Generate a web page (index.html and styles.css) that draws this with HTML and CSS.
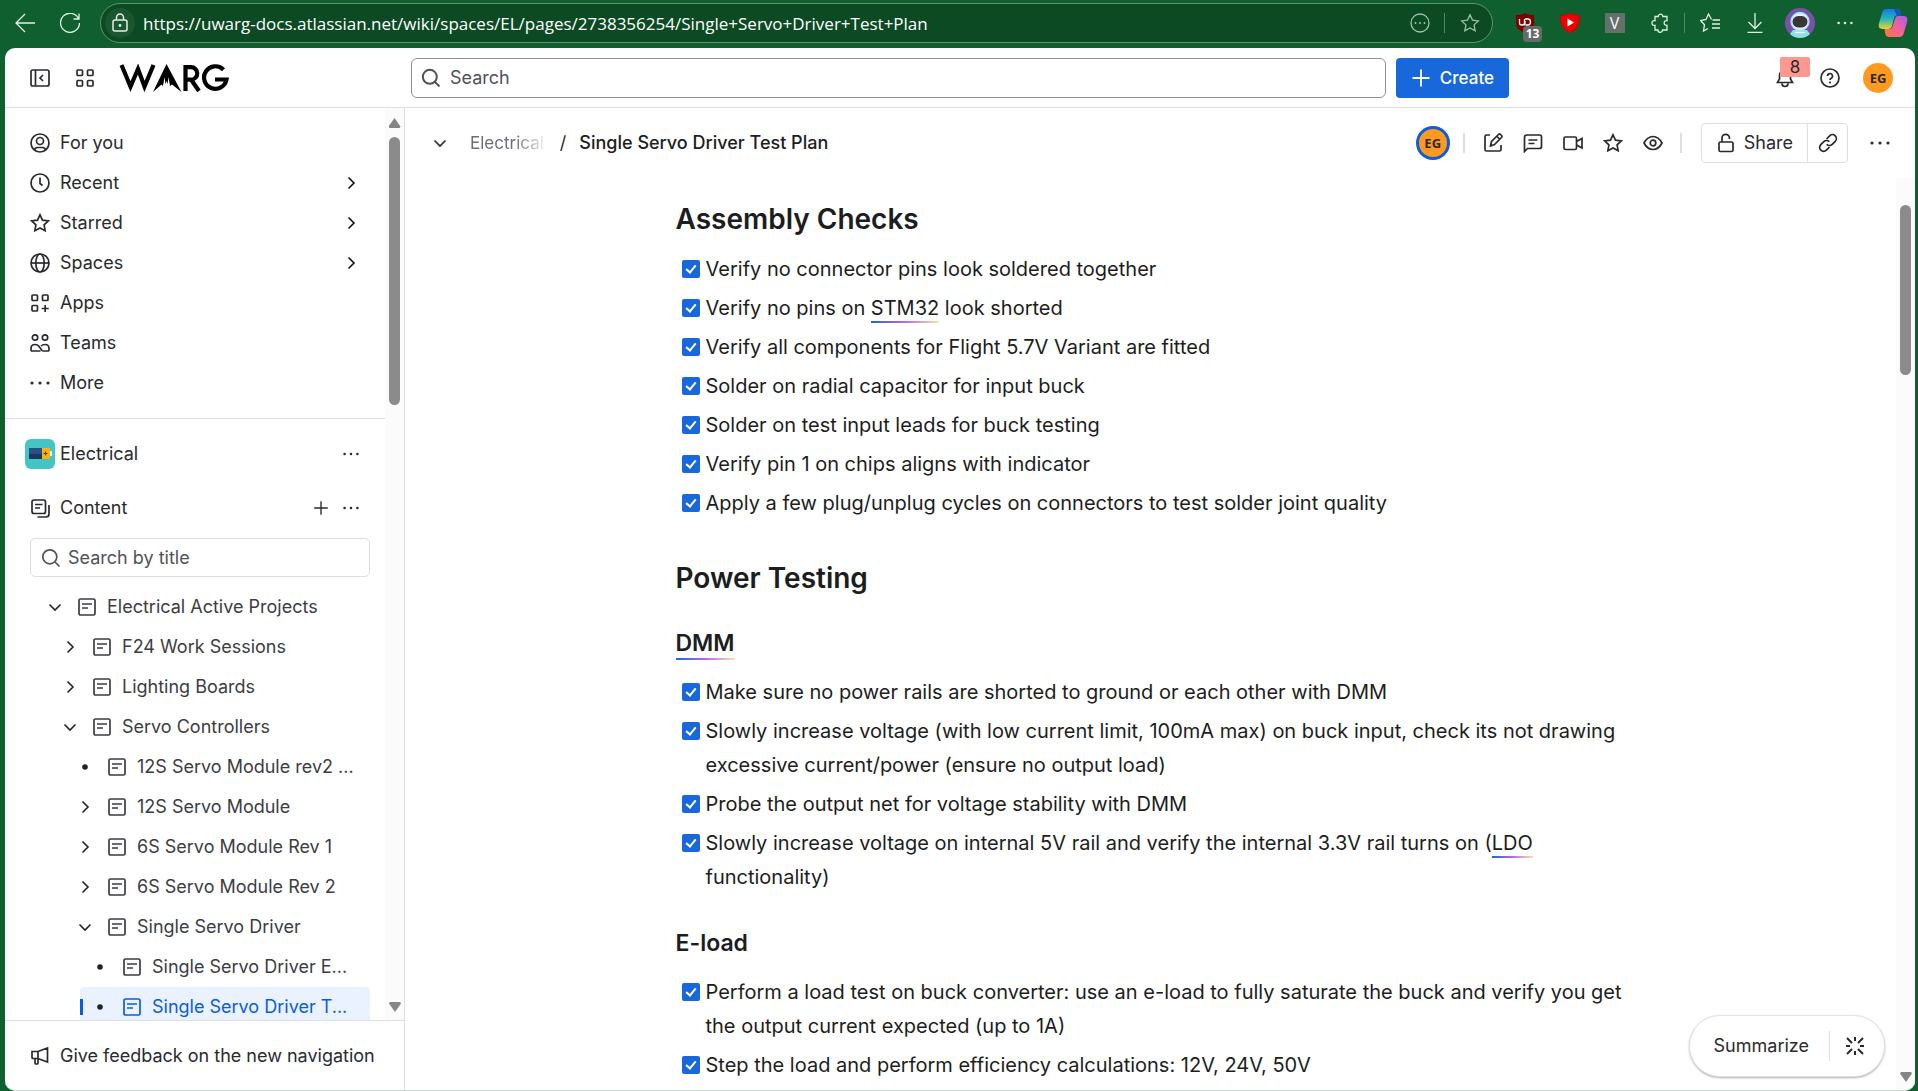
FILE: index.html
```
<!DOCTYPE html>
<html lang="en">
<head>
<meta charset="utf-8">
<title>Single Servo Driver Test Plan</title>
<link rel="stylesheet" href="styles.css">
</head>
<body>
<svg class="defs" aria-hidden="true">
  <symbol id="page" viewBox="0 0 20 20"><rect x="2" y="2" width="16" height="16" rx="1.5"/><path d="M5 7h10M5 11h6"/></symbol>
  <symbol id="right" viewBox="0 0 20 20"><path d="M7.500 4.500 13 10l-5.500 5.500"/></symbol>
  <symbol id="down" viewBox="0 0 20 20"><path d="M4.500 7.500 10 13l5.500-5.500"/></symbol>
  <symbol id="star" viewBox="0 0 20 20"><path d="m10 1.800 2.500 5.300 5.800.8-4.200 4 1 5.800-5.100-2.800-5.100 2.800 1-5.800-4.200-4 5.800-.8z"/></symbol>
  <symbol id="more" viewBox="0 0 20 20"><g class="fill"><circle cx="2" cy="10" r="1.600"/><circle cx="10" cy="10" r="1.600"/><circle cx="18" cy="10" r="1.600"/></g></symbol>
  <symbol id="bullet" viewBox="0 0 20 20"><circle class="fill" cx="10" cy="10" r="2.800"/></symbol>
  <symbol id="search" viewBox="0 0 20 20"><circle cx="8.800" cy="8.800" r="7"/><path d="m14 14 4.500 4.500"/></symbol>
  <symbol id="plus" viewBox="0 0 20 20"><path d="M10 1.500v17M1.500 10h17"/></symbol>
</svg>

<header class="browser">
  <button class="tool" aria-label="Back"><svg viewBox="0 0 20 20"><path d="M20 10H1M10 1 1 10l9 9"/></svg></button>
  <button class="tool" aria-label="Reload"><svg viewBox="0 0 20 20"><path d="M18.700 6A9.500 9.500 0 1 0 19.500 10M19 .5V6h-5.500"/></svg></button>
  <div class="address">
    <button class="site" aria-label="Site information"><svg viewBox="0 0 20 20"><rect x="3" y="7" width="14" height="11" rx="2"/><path d="M6.500 7V4.500a3.500 3.500 0 0 1 7 0V7"/><circle class="fill" cx="10" cy="12.500" r="1.400"/></svg></button>
    <input class="url" aria-label="Address" value="https://uwarg-docs.atlassian.net/wiki/spaces/EL/pages/2738356254/Single+Servo+Driver+Test+Plan">
    <button class="tool faint" aria-label="Page actions"><svg viewBox="0 0 20 20"><circle cx="10" cy="10" r="9"/><g class="fill"><circle cx="5.500" cy="10" r="1"/><circle cx="10" cy="10" r="1"/><circle cx="14.500" cy="10" r="1"/></g></svg></button>
    <span class="rule"></span>
    <button class="tool faint" aria-label="Add to favorites"><svg><use href="#star"/></svg></button>
  </div>
  <div class="extensions">
    <button class="tool" aria-label="Ad blocker"><svg viewBox="0 0 20 20"><path d="M10 0c3 2 6 2 9 2v8c0 5-4 8-9 10-5-2-9-5-9-10V2c3 0 6 0 9-2z" fill="#7d0000" stroke="none"/><path d="M4.500 6v4q0 2 2.500 2t2.500-2V6M10 12.500V8m0-2h3q2.500 0 2.500 3t-2.500 3h-2" stroke="#fff"/></svg><span class="count">13</span></button>
    <button class="tool" aria-label="Video extension"><svg viewBox="0 0 20 20"><path d="M10 0c3 2 6 2.500 9.500 2.500C20 11 17 17 10 20 3 17 0 11 .5 2.500 4 2.500 7 2 10 0z" fill="#f00000" stroke="#a31414"/><path d="m7.500 5.500 6.500 4-6.500 4z" fill="#fff" stroke="none"/></svg></button>
    <button class="tool" aria-label="V extension"><span class="vtile">V</span></button>
    <button class="tool" aria-label="Extensions"><svg viewBox="0 0 20 20"><path d="M5 3.500h3.200a2.300 2.300 0 1 1 4.600 0H17v4.200c-3.800-.7-3.800 5.300 0 4.600V17h-4.500a2.300 2.300 0 1 1-4.600 0H5v-4.700a2.400 2.400 0 1 1 0-4.600z"/></svg></button>
    <span class="rule"></span>
    <button class="tool" aria-label="Favorites"><svg viewBox="0 0 20 20"><path d="M11.500 6.500 8.500 1 6 6.500l-5.500 1 4 4.200-1 6.300 4.500-2.500M12.500 7h7.500M12 11h8M12 15h8"/></svg></button>
    <button class="tool" aria-label="Downloads"><svg viewBox="0 0 20 20"><path d="M10 0v15M3.500 9l6.500 6.500L16.500 9M2.500 19.500h15"/></svg></button>
    <button class="tool" aria-label="Profile"><svg class="big" viewBox="0 0 30 30"><circle cx="15" cy="15" r="15" fill="#7a51a8" stroke="none"/><path d="M8 22h14l3 4q-4 4-10 4T5 26z" fill="#8ce0ea" stroke="none"/><circle cx="15" cy="13.500" r="9" fill="#d9f3fa" stroke="#a6e3f0"/><rect x="7.500" y="8" width="15" height="11.500" rx="5.700" fill="#3b3533" stroke="none"/><path d="M10 24.500h10" stroke="#fff"/></svg></button>
    <button class="tool" aria-label="Settings and more"><svg class="small"><use href="#more"/></svg></button>
    <button class="tool" aria-label="Copilot"><svg class="big" viewBox="0 0 28 28"><defs><linearGradient id="cool" x2="0" y2="1"><stop stop-color="#1479e8"/><stop offset=".5" stop-color="#28b6b8"/><stop offset="1" stop-color="#e9d52b"/></linearGradient><linearGradient id="warm" x1="1" x2="0" y2="1"><stop stop-color="#a95bf0"/><stop offset=".5" stop-color="#f4619c"/><stop offset="1" stop-color="#fb7a36"/></linearGradient></defs><g stroke="none"><path d="M8 1h10q2 0 2.500 2l1 4h-4q-2 0-2.500 2l-2 8q-.6 2.500-3 2.500H4Q-.5 19.500 1 14L4 4q1-3 4-3z" fill="url(#cool)"/><path d="M17 1q2.500 0 3.500 3l1 3.500h-4L15 1z" fill="#0d55c8"/><path d="M20 27H10q-2.500 0-3-2l-1-5.500h5q2 0 2.500-2l2.500-8Q16.700 7.500 19 7.500h5q4.500 0 3 6l-3 10q-1 3.500-4 3.500z" fill="url(#warm)"/></g></svg></button>
  </div>
</header>

<div class="app">
  <header class="topbar">
    <div class="brand">
      <button class="icon" aria-label="Collapse sidebar"><svg viewBox="0 0 20 20"><rect x="1" y="2" width="18" height="16" rx="2"/><path d="M5.500 2v16M13 7l-3 3 3 3"/></svg></button>
      <button class="icon" aria-label="Switch apps"><svg viewBox="0 0 20 20"><rect x="2" y="2" width="5.500" height="5.500" rx="1"/><rect x="12.500" y="2" width="5.500" height="5.500" rx="1"/><rect x="2" y="12.500" width="5.500" height="5.500" rx="1"/><rect x="12.500" y="12.500" width="5.500" height="5.500" rx="1"/></svg></button>
      <a class="logo" href="#" aria-label="WARG home">
        <svg viewBox="0 0 110 28"><g fill="none" stroke="#000" stroke-width="4.200"><path d="M2.500 1 11.500 22.500 19 5l6.500 17.500L34.500 1" stroke-miterlimit="8"/><path d="M66.500 27V3.200h5.500a6 6 0 0 1 0 12.500h-5M72 15.500 80 27"/><path d="M104.500 5.700A11.300 11.300 0 1 0 107.500 15.500H96"/></g><path d="M47.500 0 62.500 28 53 20.500 51 22 49.500 13 48.600 20 47.500 17 46.400 20 45.500 13 44 22 42.500 20.500 34 28z"/></svg>
      </a>
    </div>
    <label class="search"><svg><use href="#search"/></svg><input type="search" placeholder="Search" aria-label="Search"></label>
    <button class="create"><svg><use href="#plus"/></svg>Create</button>
    <div class="account">
      <button class="icon bell" aria-label="Notifications"><svg viewBox="0 0 20 20"><path d="M2.500 14.500 4.500 11V7.500a5.500 5.500 0 0 1 11 0V11l2 3.500zM7 15.500a3 3 0 0 0 6 0"/></svg><span class="badge">8</span></button>
      <button class="icon" aria-label="Help"><svg viewBox="0 0 20 20"><circle cx="10" cy="10" r="9"/><path d="M7.500 8a2.500 2.500 0 1 1 3.700 2.200q-1.200.6-1.200 1.800"/><circle class="fill" cx="10" cy="14.500" r="1.100"/></svg></button>
      <button class="avatar" aria-label="Your profile">EG</button>
    </div>
  </header>

  <div class="body">
    <aside class="sidebar">
      <div class="scroller">
        <nav class="nav">
          <ul class="rows">
            <li><a class="row" href="#"><svg viewBox="0 0 20 20"><circle cx="10" cy="10" r="9"/><circle cx="10" cy="8" r="3.500"/><path d="M4.500 17q.5-2.500 3-2.500h5q2.500 0 3 2.500"/></svg>For you</a></li>
            <li><a class="row" href="#"><svg viewBox="0 0 20 20"><circle cx="10" cy="10" r="9"/><path d="M10 4.500v6l2.500 2"/></svg>Recent<svg class="end"><use href="#right"/></svg></a></li>
            <li><a class="row" href="#"><svg><use href="#star"/></svg>Starred<svg class="end"><use href="#right"/></svg></a></li>
            <li><a class="row" href="#"><svg viewBox="0 0 20 20"><circle cx="10" cy="10" r="9"/><ellipse cx="10" cy="10" rx="4.200" ry="9"/><path d="M1 10h18"/></svg>Spaces<svg class="end"><use href="#right"/></svg></a></li>
            <li><a class="row" href="#"><svg viewBox="0 0 20 20"><rect x="2" y="2" width="5.500" height="5.500" rx="1"/><rect x="12.500" y="2" width="5.500" height="5.500" rx="1"/><rect x="2" y="12.500" width="5.500" height="5.500" rx="1"/><path d="M15.200 12v7M11.700 15.500h7"/></svg>Apps</a></li>
            <li><a class="row" href="#"><svg viewBox="0 0 20 20"><circle cx="5" cy="4.500" r="2.700"/><circle cx="15" cy="4.500" r="2.700"/><path d="M10.500 18H2q-1 0-1-1v-1.500q0-4 4-4 3 0 4.500 2.500l2.500 3.500q.5.500 1.500.5H18q1 0 1-1v-1.500q0-4-4-4-2.500 0-4 1.500"/></svg>Teams</a></li>
            <li><a class="row" href="#"><svg><use href="#more"/></svg>More</a></li>
          </ul>
        </nav>
        <section class="space">
          <div class="row">
            <svg class="space-logo" viewBox="0 0 30 30"><rect width="30" height="30" rx="6" fill="#45c4c6"/><path d="M4 9h13v11H4z" fill="#2a4f87"/><path d="M4 15h13v5H4z" fill="#173a58"/><path d="M17 9h7q1 0 1 1v9q0 1-1 1h-7z" fill="#ffae0c"/><path d="M26 12v5" stroke="#fff"/><path d="M18.500 14.500h4M20.500 12.500v4" stroke="#4c3a1c" stroke-width="1"/></svg>
            Electrical<button class="mini end" aria-label="Space options"><svg><use href="#more"/></svg></button>
          </div>
          <div class="row">
            <svg viewBox="0 0 20 20"><rect x="2" y="2" width="13.500" height="13.500" rx="2"/><path d="M5 6.500h7.500M5 10h5M19 7v9q0 3-3 3H7.500"/></svg>
            Content<button class="mini end" aria-label="Create content"><svg class="dark"><use href="#plus"/></svg></button><button class="mini" aria-label="Content options"><svg><use href="#more"/></svg></button>
          </div>
          <label class="filter"><svg><use href="#search"/></svg><input type="search" placeholder="Search by title" aria-label="Search by title"></label>
          <ul class="tree">
            <li><a href="#"><svg><use href="#down"/></svg><svg><use href="#page"/></svg><span>Electrical Active Projects</span></a>
              <ul>
                <li><a href="#"><svg><use href="#right"/></svg><svg><use href="#page"/></svg><span>F24 Work Sessions</span></a></li>
                <li><a href="#"><svg><use href="#right"/></svg><svg><use href="#page"/></svg><span>Lighting Boards</span></a></li>
                <li><a href="#"><svg><use href="#down"/></svg><svg><use href="#page"/></svg><span>Servo Controllers</span></a>
                  <ul>
                    <li><a href="#"><svg><use href="#bullet"/></svg><svg><use href="#page"/></svg><span>12S Servo Module rev2 ...</span></a></li>
                    <li><a href="#"><svg><use href="#right"/></svg><svg><use href="#page"/></svg><span>12S Servo Module</span></a></li>
                    <li><a href="#"><svg><use href="#right"/></svg><svg><use href="#page"/></svg><span>6S Servo Module Rev 1</span></a></li>
                    <li><a href="#"><svg><use href="#right"/></svg><svg><use href="#page"/></svg><span>6S Servo Module Rev 2</span></a></li>
                    <li><a href="#"><svg><use href="#down"/></svg><svg><use href="#page"/></svg><span>Single Servo Driver</span></a>
                      <ul>
                        <li><a href="#"><svg><use href="#bullet"/></svg><svg><use href="#page"/></svg><span>Single Servo Driver E...</span></a></li>
                        <li><a class="current" href="#" aria-current="page"><svg><use href="#bullet"/></svg><svg><use href="#page"/></svg><span>Single Servo Driver T...</span></a></li>
                      </ul>
                    </li>
                  </ul>
                </li>
              </ul>
            </li>
          </ul>
        </section>
      </div>
      <div class="scrollbar" aria-hidden="true"><i class="up"></i><i class="thumb"></i><i class="dn"></i></div>
      <a class="feedback row" href="#"><svg viewBox="0 0 20 20"><path d="M2 5.500h6L17.500 2v14L8 12.500H3q-1 0-1-1zM8 5.500v7M5 12.500v4.500q0 1 1 1h1q1 0 1-1v-4"/></svg>Give feedback on the new navigation</a>
    </aside>

    <main class="main">
      <div class="pagebar">
        <button class="icon" aria-label="Show breadcrumbs"><svg><use href="#down"/></svg></button>
        <nav class="crumbs" aria-label="Breadcrumbs"><a class="crumb" href="#">Electrical</a><span>/</span><a class="here" href="#">Single Servo Driver Test Plan</a></nav>
        <div class="actions">
          <button class="avatar ring" aria-label="Viewing now">EG</button>
          <span class="rule"></span>
          <button class="icon" aria-label="Edit"><svg viewBox="0 0 20 20"><path d="M7 2H3.500q-1.500 0-1.500 1.500v13Q2 18 3.500 18h13q1.500 0 1.500-1.500V12M7.500 13l1-4.500 7-7q1-1 2 0l1 1q1 1 0 2l-7 7zM14 3.500 16.500 6"/></svg></button>
          <button class="icon" aria-label="Comments"><svg viewBox="0 0 20 20"><path d="M1.500 18.500v-14Q1.500 2 4 2h12.500Q18.500 2 18.500 4v9.500q0 2-2 2h-12zM5.500 7h9M5.500 10.500h6"/></svg></button>
          <button class="icon" aria-label="Video"><svg viewBox="0 0 20 20"><rect x="1" y="4" width="12.500" height="12.500" rx="1.500"/><path d="m13.500 8.500 5.500-3v9.500l-5.500-3"/></svg></button>
          <button class="icon" aria-label="Star"><svg><use href="#star"/></svg></button>
          <button class="icon" aria-label="Watch"><svg viewBox="0 0 20 20"><path d="M1 10q3.500-6.500 9-6.500T19 10q-3.500 6.500-9 6.500T1 10z"/><circle cx="10" cy="10" r="2.800"/></svg></button>
          <span class="rule"></span>
          <div class="share">
            <button class="share-main"><svg viewBox="0 0 20 20"><rect x="3" y="9" width="14" height="9.500" rx="1.500"/><path d="M6 9V5a3.700 3.700 0 0 1 7.400 0v1"/></svg>Share</button>
            <button class="share-link" aria-label="Copy link"><svg viewBox="0 0 20 20"><path d="m8.500 6 3.200-3.200a3.800 3.800 0 0 1 5.500 5.500l-3 3a3.800 3.800 0 0 1-5.500 0M11.500 14l-3.200 3.200a3.800 3.800 0 0 1-5.500-5.500l3-3a3.800 3.800 0 0 1 5.500 0"/></svg></button>
          </div>
          <button class="icon last" aria-label="More actions"><svg><use href="#more"/></svg></button>
        </div>
      </div>

      <div class="viewport">
        <article class="doc">
          <h2>Assembly Checks</h2>
          <ul class="tasks">
            <li><label><input type="checkbox" checked><span>Verify no connector pins look soldered together</span></label></li>
            <li><label><input type="checkbox" checked><span>Verify no pins on <span class="term">STM32</span> look shorted</span></label></li>
            <li><label><input type="checkbox" checked><span>Verify all components for Flight 5.7V Variant are fitted</span></label></li>
            <li><label><input type="checkbox" checked><span>Solder on radial capacitor for input buck</span></label></li>
            <li><label><input type="checkbox" checked><span>Solder on test input leads for buck testing</span></label></li>
            <li><label><input type="checkbox" checked><span>Verify pin 1 on chips aligns with indicator</span></label></li>
            <li><label><input type="checkbox" checked><span>Apply a few plug/unplug cycles on connectors to test solder joint quality</span></label></li>
          </ul>
          <h2>Power Testing</h2>
          <h3><span class="term">DMM</span></h3>
          <ul class="tasks">
            <li><label><input type="checkbox" checked><span>Make sure no power rails are shorted to ground or each other with DMM</span></label></li>
            <li><label><input type="checkbox" checked><span>Slowly increase voltage (with low current limit, 100mA max) on buck input, check its not drawing excessive current/power (ensure no output load)</span></label></li>
            <li><label><input type="checkbox" checked><span>Probe the output net for voltage stability with DMM</span></label></li>
            <li><label><input type="checkbox" checked><span>Slowly increase voltage on internal 5V rail and verify the internal 3.3V rail turns on (<span class="term">LDO</span> functionality)</span></label></li>
          </ul>
          <h3>E-load</h3>
          <ul class="tasks">
            <li><label><input type="checkbox" checked><span>Perform a load test on buck converter: use an e-load to fully saturate the buck and verify you get the output current expected (up to 1A)</span></label></li>
            <li><label><input type="checkbox" checked><span>Step the load and perform efficiency calculations: 12V, 24V, 50V</span></label></li>
          </ul>
        </article>
        <div class="scrollbar" aria-hidden="true"><i class="thumb"></i><i class="dn"></i></div>
      </div>

      <div class="summarize">
        <button class="sum-text">Summarize</button>
        <button class="sum-icon" aria-label="Assistant options"><svg viewBox="0 0 20 20"><path d="M10 1v4M10 15v4M1 10h4M15 10h4M2 2l5 5M18 2l-5 5M2 18l5-5M18 18l-5-5"/></svg></button>
      </div>
    </main>
  </div>
</div>
</body>
</html>
```
FILE: styles.css
```
* { box-sizing: border-box; }

:root {
  --green: #10602f;
  --text: #292a2e;
  --subtle: #505258;
  --line: #dddee1;
  --blue: #1868db;
}

body {
  margin: 0;
  height: 100vh;
  display: flex;
  flex-direction: column;
  overflow: hidden;
  background: var(--green);
  color: var(--text);
  font: 400 18px/24px Inter, "Liberation Sans", sans-serif;
}

button, input { font: inherit; color: inherit; }
button { border: 0; padding: 0; background: none; display: flex; align-items: center; justify-content: center; }
input { border: 0; padding: 0; background: none; outline: none; min-width: 0; }
a { color: inherit; text-decoration: none; }
ul { list-style: none; margin: 0; padding: 0; }

.defs { display: none; }
svg { width: 20px; height: 20px; flex: none; fill: none; stroke: currentColor; stroke-width: 2; }
.fill { fill: currentColor; stroke: none; }

/* Browser toolbar */
.browser { display: flex; align-items: center; height: 48px; padding: 0 3px 2px 2px; color: #e2f0e4; }
.browser svg { stroke-width: 1.300; }
.tool { position: relative; width: 45px; height: 44px; flex: none; }
.tool svg.big { width: 30px; height: 30px; }
.tool svg.small { width: 16px; stroke-width: 1; }
.faint { color: #a0bfa7; }
.address { flex: 1; display: flex; align-items: center; height: 40px; margin-left: 8px; padding: 0 0 0 4px; border: 1px solid #5b9468; border-radius: 20px; background: #0b4a23; }
.site { width: 30px; height: 30px; border-radius: 50%; background: #1a5630; margin-right: 8px; }
.site svg { stroke-width: 1.500; }
.url { flex: 1; height: 30px; color: #fff; font: 17px/24px "Open Sans", "Noto Sans", sans-serif; }
.browser .rule { width: 1px; height: 20px; margin: 0 2px; background: #548a62; }
.extensions { display: flex; align-items: center; padding-left: 9px; }
.extensions .tool:last-child { margin-left: 3px; }
.count { position: absolute; left: 21px; top: 25px; width: 19px; height: 16px; border-radius: 4px; background: #666b69; color: #fff; font: 700 12px/16px "Open Sans", sans-serif; }
.vtile { width: 20px; height: 20px; background: #66706a; color: #fff; font: 16px/20px "Open Sans", sans-serif; }

/* Application frame */
.app { flex: 1; min-height: 0; margin: 0 3px 0 5px; display: flex; flex-direction: column; overflow: hidden; background: #fff; border-bottom: 1px solid #cbdcd2; border-radius: 10px; }
.topbar { display: flex; align-items: center; height: 60px; flex: none; border-bottom: 1px solid var(--line); }
.icon { width: 40px; height: 40px; flex: none; }
.icon svg, .row svg { stroke-width: 1.700; }
.brand { display: flex; align-items: center; gap: 5px; width: 406px; flex: none; padding-left: 15px; }
.logo { margin-left: 9px; }
.logo svg { display: block; width: 110px; height: 28px; fill: #000; stroke: none; }
.search { flex: 1; display: flex; align-items: center; gap: 9px; height: 40px; padding: 0 9px; border: 1px solid #8c8f97; border-radius: 6px; color: var(--subtle); }
.search input { flex: 1; }
input::placeholder { color: var(--subtle); opacity: 1; }
.create { height: 40px; margin-left: 10px; padding: 0 15px; gap: 9px; border-radius: 4px; background: var(--blue); color: #fff; font-weight: 500; font-size: 17px; }
.create svg { stroke-width: 1.800; }
.account { display: flex; align-items: center; width: 406px; justify-content: flex-end; gap: 5px; padding-right: 22px; }
.bell { position: relative; }
.badge { position: absolute; left: 15px; top: -1px; width: 30px; height: 20px; background: #fd9891; border-radius: 2px; font-size: 17px; line-height: 20px; }
.avatar { width: 30px; height: 30px; flex: none; border-radius: 50%; background: #ff991f; color: #292a2e; font: 700 13px/16px "Open Sans", sans-serif; }
.account .avatar { margin-left: 8px; }
.body { flex: 1; min-height: 0; display: flex; }

/* Sidebar */
.sidebar { display: grid; grid-template-columns: 1fr 19px; grid-template-rows: minmax(0, 1fr) auto; width: 400px; flex: none; border-right: 1px solid var(--line); }
.scroller { overflow: hidden; }
.nav { padding: 15px 15px 15px 25px; border-bottom: 1px solid var(--line); }
.row { display: flex; align-items: center; gap: 10px; height: 40px; }
.row .end { margin-left: auto; }
.nav .end { margin-right: 9px; color: #111; stroke-width: 1.600; }
.space { padding: 15px 15px 0 25px; }
.space > .row { padding-right: 9px; margin-bottom: 14px; }
.space > .row + .row { margin-bottom: 10px; }
.row svg.space-logo { width: 30px; height: 30px; margin: 0 -5px; stroke: none; }
.mini { width: 20px; height: 20px; }
.mini svg { width: 16px; height: 16px; }
.filter { display: flex; align-items: center; gap: 7px; height: 39px; margin-bottom: 10px; padding: 0 10px; border: 1px solid var(--line); border-radius: 5px; color: var(--subtle); }
.filter svg { stroke-width: 1.700; }
.filter input { flex: 1; }
.tree { padding-left: 15px; color: #3b3d42; }
.tree ul { padding-left: 15px; }
.tree a { display: flex; align-items: center; height: 40px; white-space: nowrap; }
.tree a svg { margin-right: 12px; stroke-width: 1.700; }
.tree a svg + svg { margin-right: 10px; }
.tree a svg:first-child { color: #222327; stroke-width: 1.600; }
.tree .current { position: relative; margin-left: -10px; padding-left: 10px; background: #e9f2fe; border-radius: 4px; color: #0c5cdc; }
.current::before { content: ""; position: absolute; left: 0; top: 12px; width: 3px; height: 16px; background: #0c5cdc; }
.feedback { grid-column: 1 / 3; height: 70px; padding-left: 25px; border-top: 1px solid var(--line); }

.scrollbar { display: flex; flex-direction: column; align-items: center; width: 19px; background: #fbfbfb; }
.thumb { width: 11px; height: 268px; border-radius: 6px; background: #8b8b8b; }
.up, .dn { width: 12px; height: 10px; background: #858585; clip-path: polygon(50% 0, 100% 85%, 92% 100%, 8% 100%, 0 85%); }
.up { margin: 10px 0 9px; }
.dn { margin: auto 0 8px; transform: rotate(180deg); }

/* Page */
.main { position: relative; flex: 1; min-width: 0; display: flex; flex-direction: column; }
.pagebar { display: flex; align-items: center; height: 70px; flex: none; padding: 0 15px; }
.crumbs { display: flex; align-items: baseline; gap: 16px; margin-left: 10px; white-space: nowrap; }
.crumb { color: #6b6e76; font-size: 17px; mask-image: linear-gradient(90deg, #000 60%, #0002); }
.crumbs .here { margin-left: -3px; color: #1c1d20; font-weight: 500; }
.actions { display: flex; align-items: center; margin-left: auto; }
.ring { width: 34px; height: 34px; border: 3px solid #0c5cdc; }
.actions .rule { width: 2px; height: 20px; background: var(--line); margin: 0 8px 0 13px; }
.actions .icon + .rule { margin: 0 19px 0 7px; }
.share { display: flex; height: 40px; border: 1px solid var(--line); border-radius: 4px; }
.share-main { gap: 8px; padding: 0 14px; border-right: 1px solid var(--line); }
.share-link { width: 39px; }
.share svg { stroke-width: 1.700; }
.last { margin-left: 12px; }
.viewport { flex: 1; min-height: 0; display: flex; overflow: hidden; }
.doc { flex: 1; max-width: 950px; margin: 0 auto; padding-top: 23px; color: #1c1d20; font-size: 20px; line-height: 34px; }
h2 { margin: 0 0 15px; font-size: 28px; line-height: 36px; font-weight: 600; }
.tasks + h2 { margin-top: 40px; }
h3 { margin: 33px 0 18px; font-size: 23px; line-height: 28px; font-weight: 600; }
.tasks + h3 { margin-top: 35px; }
.tasks { display: flex; flex-direction: column; gap: 5px; padding-left: 6px; }
.tasks label { display: flex; gap: 6px; }
.tasks input { appearance: none; position: relative; width: 18px; height: 18px; flex: none; margin: 8px 0 0; border-radius: 2px; background: var(--blue); }
.tasks input:checked::before { content: ""; position: absolute; box-sizing: border-box; left: 6px; top: 3px; width: 6px; height: 10px; border: solid #fff; border-width: 0 2px 2px 0; transform: rotate(40deg); }
.term { padding-bottom: 3px; background: linear-gradient(90deg, #1868db, #bf63f3 50%, #f8e6a0) bottom / 100% 2px no-repeat; }
.viewport .thumb { height: 170px; margin-top: 27px; }

.summarize { position: absolute; right: 30px; bottom: 13px; display: flex; align-items: center; height: 62px; border: 1px solid #e3e3e6; border-radius: 31px; background: #fff; box-shadow: 0 1px 2px rgba(30, 31, 33, 0.350); }
.sum-text { height: 30px; padding: 0 20px 0 24px; border-right: 1px solid var(--line); }
.sum-icon { width: 54px; height: 40px; padding-right: 4px; }
```
